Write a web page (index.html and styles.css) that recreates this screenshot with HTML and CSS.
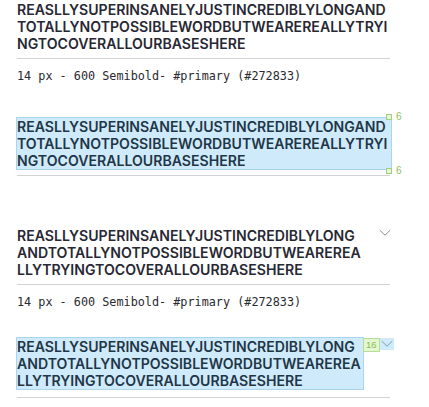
FILE: index.html
```html
<!DOCTYPE html>
<html>
<head>
<meta charset="utf-8">
<link rel="stylesheet" href="styles.css">
</head>
<body>
<div class="page">
  <section class="item item-a">
    <div class="row">
      <p class="title">REASLLYSUPERINSANELYJUSTINCREDIBLYLONGANDTOTALLYNOTPOSSIBLEWORDBUTWEAREREALLYTRYINGTOCOVERALLOURBASESHERE</p>
    </div>
    <div class="rule"></div>
    <p class="spec">14 px - 600 Semibold- #primary (#272833)</p>
  </section>

  <section class="item item-b">
    <div class="row">
      <p class="title hl">REASLLYSUPERINSANELYJUSTINCREDIBLYLONGANDTOTALLYNOTPOSSIBLEWORDBUTWEAREREALLYTRYINGTOCOVERALLOURBASESHERE</p>
      <span class="mark mark-top"><i class="sq"></i><b>6</b></span>
      <span class="mark mark-bottom"><i class="sq"></i><b>6</b></span>
    </div>
    <div class="rule rule-b"></div>
  </section>

  <section class="item item-c">
    <div class="row">
      <p class="title narrow">REASLLYSUPERINSANELYJUSTINCREDIBLYLONGANDTOTALLYNOTPOSSIBLEWORDBUTWEAREREALLYTRYINGTOCOVERALLOURBASESHERE</p>
      <span class="chev"><svg width="12" height="8" viewBox="0 0 12 8"><path d="M0.8 1.2 L6 6.2 L11.2 1.2" fill="none" stroke="#8a8b98" stroke-width="1"/></svg></span>
    </div>
    <div class="rule rule-c"></div>
    <p class="spec spec-c">14 px - 600 Semibold- #primary (#272833)</p>
  </section>

  <section class="item item-d">
    <div class="row">
      <p class="title narrow hl">REASLLYSUPERINSANELYJUSTINCREDIBLYLONGANDTOTALLYNOTPOSSIBLEWORDBUTWEAREREALLYTRYINGTOCOVERALLOURBASESHERE</p>
      <span class="badge">16</span>
      <span class="chev chev-hl"><svg width="12" height="8" viewBox="0 0 12 8"><path d="M0.8 1.2 L6 6.2 L11.2 1.2" fill="none" stroke="#7f9fb3" stroke-width="1"/></svg></span>
    </div>
    <div class="rule rule-d"></div>
  </section>
</div>
</body>
</html>
```

FILE: styles.css
```css
* { box-sizing: border-box; }
html, body { margin: 0; padding: 0; background: #ffffff; }
.page {
  width: 429px;
  padding: 0 0 0 17px;
}
.item { width: 374px; }
.row {
  position: relative;
  display: flex;
  align-items: flex-start;
}
.title {
  flex: 0 0 auto;
  margin: 0;
  width: 373px;
  font-family: "Inter", "Liberation Sans", Arial, sans-serif;
  font-weight: 600;
  font-size: 14.1px;
  line-height: 17px;
  letter-spacing: 0;
  color: #272833;
  word-break: break-all;
}
.item-a .title { margin-top: 1px; }
.title.narrow { width: 346px; }
.title.hl {
  background: #cfebfb;
  outline: 1px solid #a9d6ec;
  color: #1f3647;
}
.item-b .title.hl { width: 374px; }
.rule {
  height: 1px;
  background: #d3d3d6;
  margin-top: 6px;
  width: 373px;
}
.spec {
  margin: 9px 0 0 0;
  font-family: "DejaVu Sans Mono", "Liberation Mono", monospace;
  font-size: 11.8px;
  line-height: 16px;
  color: #2a2a30;
}
.item-b { margin-top: 34px; }
.item-c { margin-top: 51px; }
.item-d { margin-top: 28px; }
.rule-d { margin-top: 8px; }
.mark {
  position: absolute;
  left: 369px;
  display: flex;
  align-items: center;
  gap: 4px;
}
.mark-top { top: -6px; }
.mark-bottom { bottom: -7px; }
.sq {
  display: block;
  width: 6px;
  height: 6px;
  border: 1px solid #9fd07a;
  background: #e6f6d8;
}
.mark b {
  font-family: "Liberation Sans", Arial, sans-serif;
  font-weight: 400;
  font-size: 10px;
  line-height: 10px;
  color: #8cc45a;
}
.chev {
  flex: 0 0 auto;
  display: flex;
  align-items: center;
  justify-content: center;
  margin: 2px 0 0 16px;
  width: 12px;
  height: 8px;
}
.chev-hl {
  margin: 0 0 0 0;
  width: 14px;
  height: 12px;
  align-items: center;
  background: #cfebfb;
}
.badge {
  flex: 0 0 auto;
  margin-left: 0;
  height: 14px;
  padding: 0 2px;
  background: #e4f5d2;
  border: 1px solid #b7de93;
  font-family: "Liberation Sans", Arial, sans-serif;
  font-size: 9.5px;
  line-height: 12px;
  color: #86bf4f;
}
```
